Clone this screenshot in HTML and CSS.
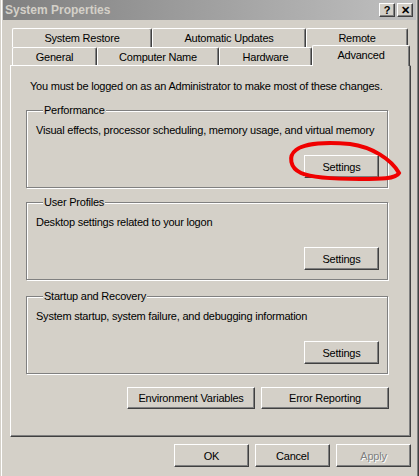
FILE: index.html
```html
<!DOCTYPE html>
<html lang="en">
<head>
  <meta charset="UTF-8">
  <title>System Properties</title>
  <link rel="stylesheet" href="styles.css">
</head>
<body>
  <div class="window">
    <div class="titlebar">
      <span class="title">System Properties</span>
      <div class="caption-btns">
        <span class="cbtn">?</span>
        <span class="cbtn">&#x2715;</span>
      </div>
    </div>

    <div class="tabs">
      <div class="tab-row back">
        <div class="tab t-restore">System Restore</div>
        <div class="tab t-updates">Automatic Updates</div>
        <div class="tab t-remote">Remote</div>
      </div>
      <div class="tab-row front">
        <div class="tab t-general">General</div>
        <div class="tab t-name">Computer Name</div>
        <div class="tab t-hardware">Hardware</div>
        <div class="tab t-advanced active">Advanced</div>
      </div>
    </div>

    <div class="panel">
      <p class="note">You must be logged on as an Administrator to make most of these changes.</p>

      <fieldset class="group">
        <legend>Performance</legend>
        <p>Visual effects, processor scheduling, memory usage, and virtual memory</p>
        <div class="group-actions"><button class="btn">Settings</button></div>
      </fieldset>

      <fieldset class="group">
        <legend>User Profiles</legend>
        <p>Desktop settings related to your logon</p>
        <div class="group-actions"><button class="btn">Settings</button></div>
      </fieldset>

      <fieldset class="group">
        <legend>Startup and Recovery</legend>
        <p>System startup, system failure, and debugging information</p>
        <div class="group-actions"><button class="btn">Settings</button></div>
      </fieldset>

      <div class="panel-actions">
        <button class="btn wide">Environment Variables</button>
        <button class="btn wide">Error Reporting</button>
      </div>
    </div>

    <div class="dialog-actions">
      <button class="btn">OK</button>
      <button class="btn">Cancel</button>
      <button class="btn" disabled>Apply</button>
    </div>

    <svg class="mark" width="419" height="476" viewBox="0 0 419 476">
      <path d="M296 150 C305 143 328 142 350 144 C372 147 391 159 399 173 C396 179 380 179 360 179 C335 179 312 178 301 173 C290 168 288 156 296 150"
            fill="none" stroke="#f00000" stroke-width="4" stroke-linecap="round"/>
    </svg>
  </div>
</body>
</html>
```

FILE: styles.css
```css
body {
  margin: 0;
  background: #d4d0c8;
  font-family: 'Liberation Sans', Arial, sans-serif;
  font-size: 11px;
  letter-spacing: -0.22px;
  color: #000;
}

.window {
  position: relative;
  width: 419px;
  height: 476px;
  box-sizing: border-box;
  padding: 0 3px;
  background: #d4d0c8;
  box-shadow: inset 1px 0 0 #d4d0c8, inset 2px 0 0 #fff,
              inset -1px 0 0 #404040, inset -2px 0 0 #808080;
  overflow: hidden;
}

/* title bar */
.titlebar {
  height: 20px;
  display: flex;
  align-items: center;
  justify-content: space-between;
  padding: 0 3px 0 2px;
  background: linear-gradient(to right, #808080, #c0c0c0);
}

.title {
  font-weight: bold;
  color: #d4d0c8;
  font-size: 12px;
  letter-spacing: 0;
}

.caption-btns {
  display: flex;
  gap: 2px;
}

.cbtn {
  width: 14px;
  height: 12px;
  display: flex;
  align-items: center;
  justify-content: center;
  background: #d4d0c8;
  border: 1px solid;
  border-color: #fff #404040 #404040 #fff;
  box-shadow: inset -1px -1px #808080;
  font-weight: bold;
  font-size: 11px;
  line-height: 1;
  letter-spacing: 0;
}

/* tabs */
.tabs {
  margin: 8px 0 0 7px;
}

.tab-row {
  display: flex;
  padding-left: 2px;
}

.tab {
  box-sizing: border-box;
  text-align: center;
  background: #d4d0c8;
  border-top: 1px solid #fff;
  border-left: 1px solid #fff;
  border-right: 1px solid #404040;
  box-shadow: inset -1px 0 #808080;
  border-radius: 2px 2px 0 0;
}

.back .tab {
  height: 19px;
  padding-top: 3px;
}

.front .tab {
  height: 18px;
  padding-top: 3px;
}

.t-restore { width: 140px; }
.t-updates { width: 154px; }
.t-remote { width: 102px; }
.t-general { width: 85px; }
.t-name { width: 122px; }
.t-hardware { width: 93px; }

.front .tab.active {
  width: 98px;
  height: 21px;
  margin-top: -2px;
  margin-bottom: -1px;
  padding-top: 3px;
  position: relative;
  z-index: 1;
}

/* panel */
.panel {
  width: 401px;
  height: 372px;
  box-sizing: border-box;
  margin-left: 7px;
  padding: 14px 22px 0 15px;
  border: 1px solid;
  border-color: #fff #404040 #404040 #fff;
  box-shadow: inset -1px -1px #808080;
}

.note {
  margin: 0 0 11px 4px;
  line-height: 13px;
  white-space: nowrap;
}

.group {
  margin: 0 0 8px;
  padding: 0 8px 9px 9px;
  border: 1px solid #808080;
  box-shadow: inset 1px 1px #fff, 1px 1px #fff;
}

.group:nth-of-type(2) {
  margin-bottom: 10px;
}

.group legend {
  padding: 0 1px;
  margin-left: 7px;
  background: #d4d0c8;
  line-height: 13px;
}

.group p {
  margin: 7px 0 0;
  line-height: 13px;
  white-space: nowrap;
}

.group-actions {
  margin-top: 18px;
  display: flex;
  justify-content: flex-end;
}

.btn {
  width: 75px;
  height: 23px;
  background: #d4d0c8;
  border: 1px solid;
  border-color: #fff #404040 #404040 #fff;
  box-shadow: inset -1px -1px #808080;
  font-family: 'Liberation Sans', Arial, sans-serif;
  font-size: 11px;
  letter-spacing: -0.22px;
  color: #000;
  padding: 0;
}

.btn:disabled {
  color: #808080;
  text-shadow: 1px 1px 0 #fff;
}

.panel-actions {
  display: flex;
  justify-content: flex-end;
  gap: 6px;
  margin-top: 13px;
  margin-right: -1px;
}

.btn.wide {
  width: 128px;
  height: 22px;
}

.dialog-actions {
  display: flex;
  justify-content: flex-end;
  gap: 6px;
  margin: 7px 5px 0 0;
}

.mark {
  position: absolute;
  left: 0;
  top: 0;
  pointer-events: none;
}
```
